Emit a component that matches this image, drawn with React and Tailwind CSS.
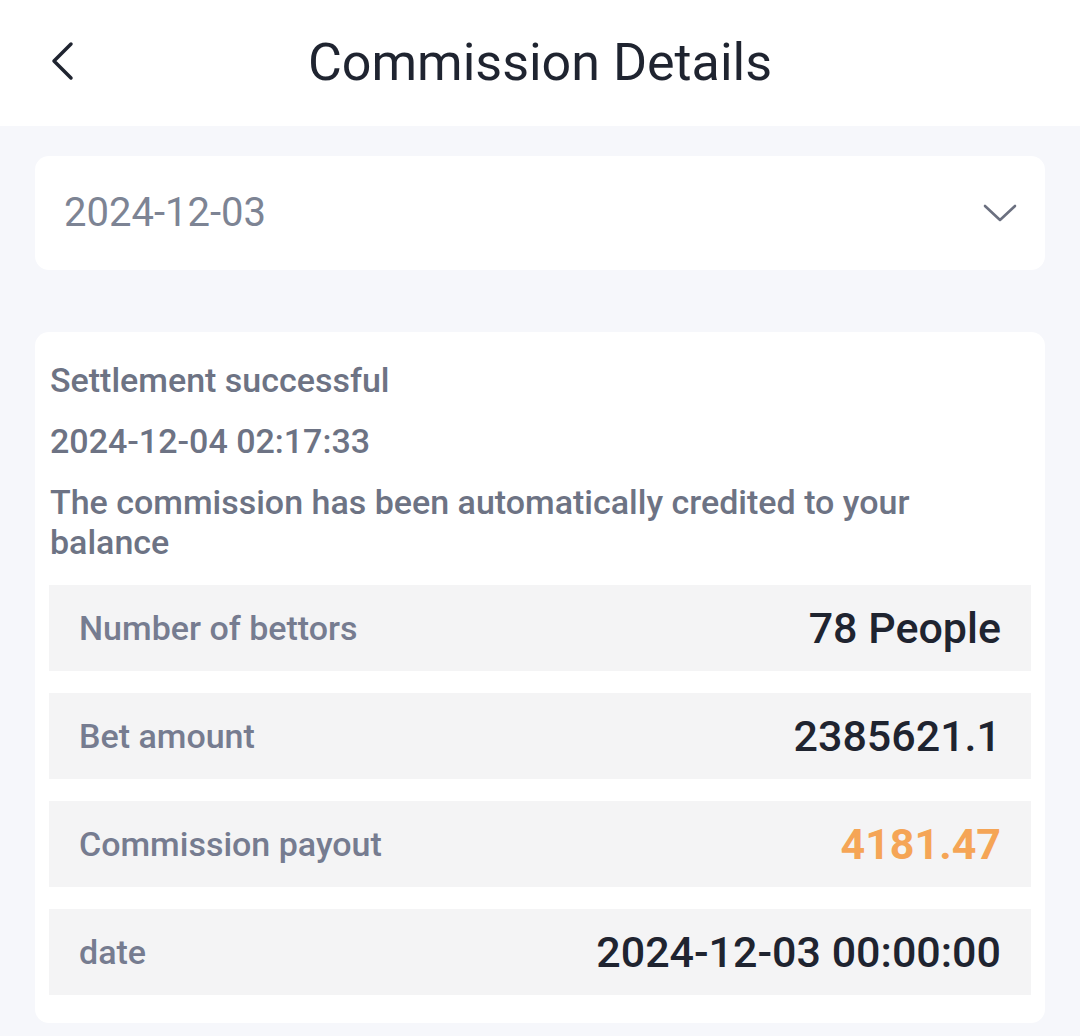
import React from 'react';

const rows = [
  { label: 'Number of bettors', value: '78 People' },
  { label: 'Bet amount', value: '2385621.1' },
  { label: 'Commission payout', value: '4181.47', accent: true },
  { label: 'date', value: '2024-12-03 00:00:00' },
];

const App = () => {
  return (
    <div className="min-h-[1036px] w-full bg-[#f6f7fb] font-['Roboto',sans-serif]">
      <header className="relative flex h-[126px] items-center justify-center bg-white">
        <button className="absolute left-[44px] top-[38px] flex h-[46px] w-[36px] items-center justify-center text-[#1f2430]">
          <svg width="26" height="40" viewBox="0 0 26 40" fill="none" stroke="currentColor" strokeWidth="3.5" strokeLinecap="round" strokeLinejoin="round">
            <path d="M22 3 L5 20 L22 37" />
          </svg>
        </button>
        <h1 className="text-[52px] font-normal leading-none text-[#1f2430]">Commission Details</h1>
      </header>

      <div className="flex flex-col gap-[62px] px-[35px] pt-[30px]">
        <div className="flex h-[114px] items-center justify-between rounded-[14px] bg-white pl-[29px] pr-[28px]">
          <span className="text-[40px] text-[#7d8494]">2024-12-03</span>
          <svg width="34" height="20" viewBox="0 0 34 20" fill="none" stroke="#6b7080" strokeWidth="2.6" strokeLinecap="round" strokeLinejoin="round">
            <path d="M2 3 L17 17 L32 3" />
          </svg>
        </div>

        <div className="flex flex-col rounded-[14px] bg-white px-[14px] pb-[28px] pt-[28px]">
          <div className="flex flex-col gap-[21px] pl-[1px] pr-[20px] text-[34px] font-medium leading-[40px] text-[#6d7384]">
            <p>Settlement successful</p>
            <p>2024-12-04 02:17:33</p>
            <p>The commission has been automatically credited to your balance</p>
          </div>
          <div className="mt-[23px] flex flex-col gap-[22px]">
            {rows.map((r) => (
              <div key={r.label} className="flex h-[86px] items-center justify-between bg-[#f4f4f5] pl-[30px] pr-[30px]">
                <span className="text-[34px] font-medium text-[#767c90]">{r.label}</span>
                <span className={r.accent ? 'text-[43px] font-bold text-[#f5a556]' : 'text-[43px] font-medium text-[#1f2430]'}>{r.value}</span>
              </div>
            ))}
          </div>
        </div>
      </div>
    </div>
  );
};

export default App;
